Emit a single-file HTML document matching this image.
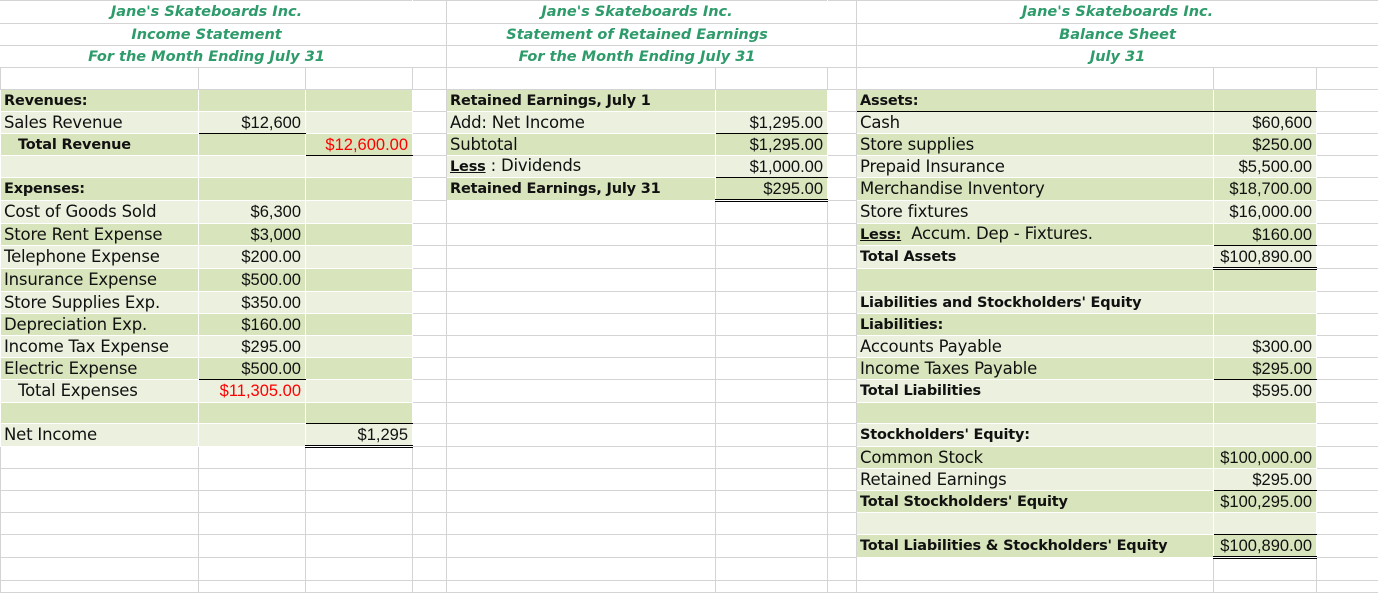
<!DOCTYPE html>
<html><head><meta charset="utf-8"><style>
body{margin:0;background:#fff;width:1378px;height:592px;overflow:hidden}
table{border-collapse:collapse;table-layout:fixed;width:1378px;font-family:"DejaVu Sans","Liberation Sans",sans-serif;font-size:16.5px;color:#111}
td{border:1px solid #d4d4d4;padding:0 3px;white-space:nowrap;overflow:hidden;line-height:18px;letter-spacing:-0.2px}
td.d{background:#d8e4bc;border-color:#fff}
td.l{background:#ebf1de;border-color:#fff}
td.h{color:#2e9b6b;font-weight:bold;font-style:italic;text-align:center;font-size:14.5px;border-left-color:#fff;border-right-color:#fff;letter-spacing:0}
td.n{text-align:right;font-family:"Liberation Sans",sans-serif;font-size:16.5px;padding-right:4px;letter-spacing:0}
.b{font-weight:bold;font-size:14.5px;letter-spacing:-0.2px}
.r{color:#f00}
td.bb{border-bottom:1px solid #000}
td.db{border-bottom:3px double #000}
.i{padding-left:17px}
</style></head><body>
<table>
<colgroup><col style="width:198px"><col style="width:107px"><col style="width:107px"><col style="width:34px"><col style="width:269px"><col style="width:112px"><col style="width:29px"><col style="width:357px"><col style="width:103px"><col style="width:62px"></colgroup>
<tr style="height:23px"><td colspan="3" class="h">Jane's Skateboards Inc.</td><td></td><td colspan="2" class="h">Jane's Skateboards Inc.</td><td></td><td colspan="3" class="h">Jane's Skateboards Inc.</td></tr>
<tr style="height:22px"><td colspan="3" class="h">Income Statement</td><td></td><td colspan="2" class="h">Statement of Retained Earnings</td><td></td><td colspan="3" class="h">Balance Sheet</td></tr>
<tr style="height:22px"><td colspan="3" class="h">For the Month Ending July 31</td><td></td><td colspan="2" class="h">For the Month Ending July 31</td><td></td><td colspan="3" class="h">July 31</td></tr>
<tr style="height:22px"><td></td><td></td><td></td><td></td><td></td><td></td><td></td><td></td><td></td><td></td></tr>
<tr style="height:22px"><td class="d b">Revenues:</td><td class="d"></td><td class="d"></td><td></td><td class="d b">Retained Earnings, July 1</td><td class="d"></td><td></td><td class="d b bb">Assets:</td><td class="d bb"></td><td></td></tr>
<tr style="height:22px"><td class="l">Sales Revenue</td><td class="l n bb">$12,600</td><td class="l"></td><td></td><td class="l">Add: Net Income</td><td class="l n bb">$1,295.00</td><td></td><td class="l">Cash</td><td class="l n">$60,600</td><td></td></tr>
<tr style="height:22px"><td class="d b i">Total Revenue</td><td class="d"></td><td class="d n r bb">$12,600.00</td><td></td><td class="d">Subtotal</td><td class="d n">$1,295.00</td><td></td><td class="d">Store supplies</td><td class="d n">$250.00</td><td></td></tr>
<tr style="height:22px"><td class="l"></td><td class="l"></td><td class="l"></td><td></td><td class="l"><b style="font-size:14.5px"><u>Less</u></b> : Dividends</td><td class="l n bb">$1,000.00</td><td></td><td class="l">Prepaid Insurance</td><td class="l n">$5,500.00</td><td></td></tr>
<tr style="height:23px"><td class="d b">Expenses:</td><td class="d"></td><td class="d"></td><td></td><td class="d b">Retained Earnings, July 31</td><td class="d n db">$295.00</td><td></td><td class="d">Merchandise Inventory</td><td class="d n">$18,700.00</td><td></td></tr>
<tr style="height:23px"><td class="l">Cost of Goods Sold</td><td class="l n">$6,300</td><td class="l"></td><td></td><td></td><td></td><td></td><td class="l">Store fixtures</td><td class="l n">$16,000.00</td><td></td></tr>
<tr style="height:22px"><td class="d">Store Rent Expense</td><td class="d n">$3,000</td><td class="d"></td><td></td><td></td><td></td><td></td><td class="d"><b style="font-size:14.5px"><u>Less:</u></b>&nbsp; Accum. Dep - Fixtures.</td><td class="d n bb">$160.00</td><td></td></tr>
<tr style="height:23px"><td class="l">Telephone Expense</td><td class="l n">$200.00</td><td class="l"></td><td></td><td></td><td></td><td></td><td class="l b">Total Assets</td><td class="l n db">$100,890.00</td><td></td></tr>
<tr style="height:23px"><td class="d">Insurance Expense</td><td class="d n">$500.00</td><td class="d"></td><td></td><td></td><td></td><td></td><td class="d"></td><td class="d"></td><td></td></tr>
<tr style="height:22px"><td class="l">Store Supplies Exp.</td><td class="l n">$350.00</td><td class="l"></td><td></td><td></td><td></td><td></td><td class="l b">Liabilities and Stockholders' Equity</td><td class="l"></td><td></td></tr>
<tr style="height:22px"><td class="d">Depreciation Exp.</td><td class="d n">$160.00</td><td class="d"></td><td></td><td></td><td></td><td></td><td class="d b">Liabilities:</td><td class="d"></td><td></td></tr>
<tr style="height:22px"><td class="l">Income Tax Expense</td><td class="l n">$295.00</td><td class="l"></td><td></td><td></td><td></td><td></td><td class="l">Accounts Payable</td><td class="l n">$300.00</td><td></td></tr>
<tr style="height:22px"><td class="d">Electric Expense</td><td class="d n bb">$500.00</td><td class="d"></td><td></td><td></td><td></td><td></td><td class="d">Income Taxes Payable</td><td class="d n bb">$295.00</td><td></td></tr>
<tr style="height:23px"><td class="l i">Total Expenses</td><td class="l n r">$11,305.00</td><td class="l"></td><td></td><td></td><td></td><td></td><td class="l b">Total Liabilities</td><td class="l n">$595.00</td><td></td></tr>
<tr style="height:21px"><td class="d"></td><td class="d"></td><td class="d bb"></td><td></td><td></td><td></td><td></td><td class="d"></td><td class="d"></td><td></td></tr>
<tr style="height:23px"><td class="l">Net Income</td><td class="l"></td><td class="l n db">$1,295</td><td></td><td></td><td></td><td></td><td class="l b">Stockholders' Equity:</td><td class="l"></td><td></td></tr>
<tr style="height:22px"><td></td><td></td><td></td><td></td><td></td><td></td><td></td><td class="d">Common Stock</td><td class="d n">$100,000.00</td><td></td></tr>
<tr style="height:22px"><td></td><td></td><td></td><td></td><td></td><td></td><td></td><td class="l">Retained Earnings</td><td class="l n bb">$295.00</td><td></td></tr>
<tr style="height:22px"><td></td><td></td><td></td><td></td><td></td><td></td><td></td><td class="d b">Total Stockholders' Equity</td><td class="d n">$100,295.00</td><td></td></tr>
<tr style="height:22px"><td></td><td></td><td></td><td></td><td></td><td></td><td></td><td class="l"></td><td class="l bb"></td><td></td></tr>
<tr style="height:23px"><td></td><td></td><td></td><td></td><td></td><td></td><td></td><td class="d b">Total Liabilities &amp; Stockholders' Equity</td><td class="d n db">$100,890.00</td><td></td></tr>
<tr style="height:23px"><td></td><td></td><td></td><td></td><td></td><td></td><td></td><td></td><td></td><td></td></tr>
<tr style="height:12px"><td></td><td></td><td></td><td></td><td></td><td></td><td></td><td></td><td></td><td></td></tr>
</table>
</body></html>
